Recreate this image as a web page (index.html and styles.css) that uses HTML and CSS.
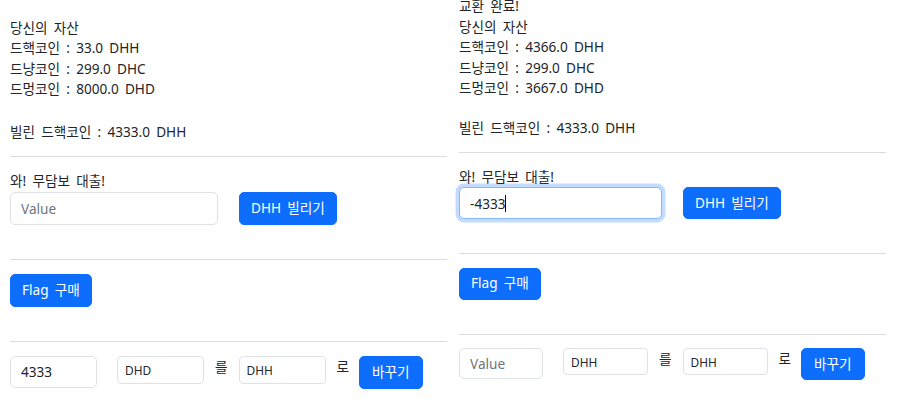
FILE: index.html
```html
<!DOCTYPE html>
<html lang="ko">
    <head>
        <meta charset="UTF-8" />
        <meta name="viewport" content="width=device-width, initial-scale=1.0" />
        <title>드코인 거래소</title>
        <link rel="stylesheet" href="styles.css">
    </head>
    <body>
        <div class="screens">
            <!-- 교환 전 -->
            <section class="panel panel--before">
                <div class="assets">
                    <div class="notice">&nbsp;</div>
                    <div>당신의 자산</div>
                    <div>드핵코인 : 33.0 DHH</div>
                    <div>드냥코인 : 299.0 DHC</div>
                    <div>드멍코인 : 8000.0 DHD</div>
                    <div class="loan-total">빌린 드핵코인 : 4333.0 DHH</div>
                </div>
                <hr>
                <div class="block">
                    <div class="block-label">와! 무담보 대출!</div>
                    <div class="loan-row">
                        <div class="loan-field">
                            <input class="field field--loan" type="text" placeholder="Value">
                        </div>
                        <button class="btn">DHH 빌리기</button>
                    </div>
                </div>
                <hr>
                <div class="block">
                    <button class="btn">Flag 구매</button>
                </div>
                <hr>
                <div class="swap-row">
                    <input class="field field--amount" type="text" value="4333" placeholder="Value">
                    <input class="field field--sm" type="text" value="DHD">
                    <span class="swap-word">를</span>
                    <input class="field field--sm" type="text" value="DHH">
                    <span class="swap-word">로</span>
                    <button class="btn">바꾸기</button>
                </div>
            </section>

            <!-- 교환 후 -->
            <section class="panel panel--after">
                <div class="assets">
                    <div class="notice">교환 완료!</div>
                    <div>당신의 자산</div>
                    <div>드핵코인 : 4366.0 DHH</div>
                    <div>드냥코인 : 299.0 DHC</div>
                    <div>드멍코인 : 3667.0 DHD</div>
                    <div class="loan-total">빌린 드핵코인 : 4333.0 DHH</div>
                </div>
                <hr>
                <div class="block">
                    <div class="block-label">와! 무담보 대출!</div>
                    <div class="loan-row">
                        <div class="loan-field">
                            <input class="field field--loan is-focused" type="text" value="-4333" placeholder="Value">
                            <span class="caret"></span>
                        </div>
                        <button class="btn">DHH 빌리기</button>
                    </div>
                </div>
                <hr>
                <div class="block">
                    <button class="btn">Flag 구매</button>
                </div>
                <hr>
                <div class="swap-row">
                    <input class="field field--amount" type="text" placeholder="Value">
                    <input class="field field--sm" type="text" value="DHH">
                    <span class="swap-word">를</span>
                    <input class="field field--sm" type="text" value="DHH">
                    <span class="swap-word">로</span>
                    <button class="btn">바꾸기</button>
                </div>
            </section>
        </div>
    </body>
</html>
```

FILE: styles.css
```css
:root {
    --text: #212529;
    --primary: #0d6efd;
    --line: 20.6px;
}
body {
    margin: 0;
    background: #fff;
    color: var(--text);
    font-family: "Noto Sans", "Noto Sans CJK KR", sans-serif;
    font-size: 13.6px;
    line-height: var(--line);
    word-spacing: 2.7px;
}

.screens {
    display: flex;
    align-items: flex-start;
    margin-top: -4px;
}
.panel {
    --loan-w: 208px;
    --amount-w: 87px;
    --sm-w: 87px;
    --gap-lead: 13px;
    --hr-after: 14px;
    --block-gap: 34px;
    --ctl-h: 33px;
}
.panel--before {
    width: 437px;
    margin-left: 10px;
    padding-top: 1px;
    --gap-lead: 22px;
}
.panel--after {
    width: 427px;
    margin-left: 12px;
    --loan-w: 203px;
    --amount-w: 84px;
    --sm-w: 85px;
    --gap-lead: 19px;
    --hr-after: 13.5px;
    --ctl-h: 32px;
}

.assets .loan-total {
    margin-top: var(--gap-lead);
}

hr {
    margin: 13.5px 0 var(--hr-after);
    border: 0;
    border-top: 1px solid #dcdcdc;
}

/* hr 위쪽 margin과 겹침 */
.block {
    margin-bottom: var(--block-gap);
}

.loan-row {
    display: flex;
    align-items: flex-start;
    gap: 21px;
}
.loan-field {
    position: relative;
}

.field {
    box-sizing: border-box;
    display: block;
    height: var(--ctl-h);
    padding: 5px 10px;
    border: 1px solid #dee2e6;
    border-radius: 5px;
    background: #fff;
    color: var(--text);
    font: inherit;
    word-spacing: normal;
    outline: none;
}
.field::placeholder {
    color: #6c757d;
}
.field--loan {
    width: var(--loan-w);
}
.field--loan.is-focused {
    border-color: #86b7fe;
    box-shadow: 0 0 0 3.4px rgba(13, 110, 253, 0.25);
}
.caret {
    position: absolute;
    left: 46px;
    top: 8px;
    width: 1px;
    height: 17px;
    background: #000;
}
.field--amount {
    width: var(--amount-w);
    height: calc(var(--ctl-h) - 1px);
    margin-right: 9px;
}
.field--sm {
    width: var(--sm-w);
    height: calc(var(--ctl-h) - 5px);
    padding: 4px 7px;
    font-size: 11.9px;
    border-radius: 4px;
}

.btn {
    height: var(--ctl-h);
    padding: 0 11px;
    border: 1px solid var(--primary);
    border-radius: 5px;
    background: var(--primary);
    color: #fff;
    font: inherit;
    word-spacing: inherit;
    cursor: pointer;
}

.swap-row {
    display: flex;
    align-items: flex-start;
    gap: 11px;
}
.swap-word {
    line-height: 21px;
}
.swap-row .btn {
    padding: 0 12px;
    margin-left: -1px;
}
```
